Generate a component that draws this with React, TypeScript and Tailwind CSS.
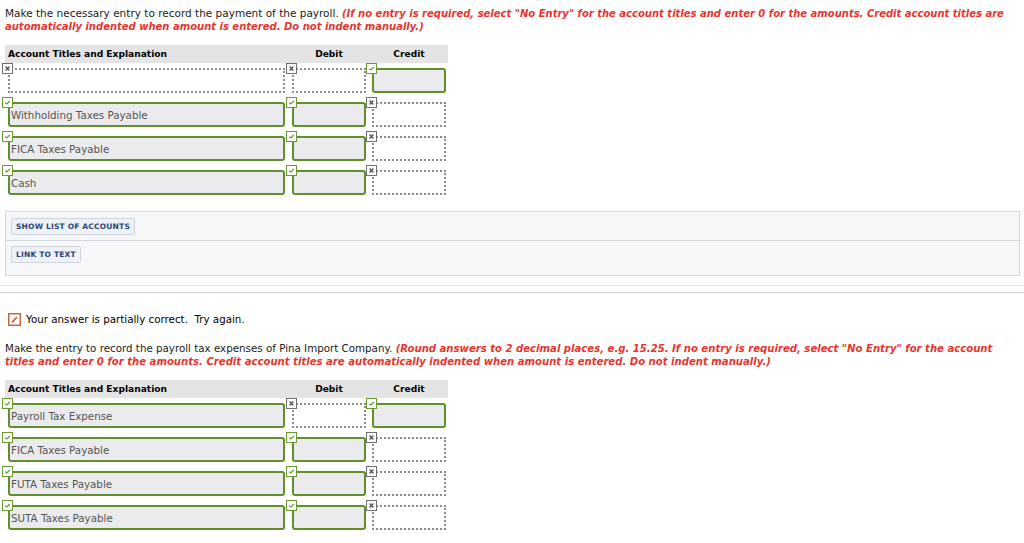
import React from 'react';

type Cell = { ok: boolean; text?: string };
type Row = [Cell, Cell, Cell];

const first: Row[] = [
  [{ ok: false }, { ok: false }, { ok: true }],
  [{ ok: true, text: 'Withholding Taxes Payable' }, { ok: true }, { ok: false }],
  [{ ok: true, text: 'FICA Taxes Payable' }, { ok: true }, { ok: false }],
  [{ ok: true, text: 'Cash' }, { ok: true }, { ok: false }],
];

const second: Row[] = [
  [{ ok: true, text: 'Payroll Tax Expense' }, { ok: false }, { ok: true }],
  [{ ok: true, text: 'FICA Taxes Payable' }, { ok: true }, { ok: false }],
  [{ ok: true, text: 'FUTA Taxes Payable' }, { ok: true }, { ok: false }],
  [{ ok: true, text: 'SUTA Taxes Payable' }, { ok: true }, { ok: false }],
];

function Mark({ ok }: { ok: boolean }) {
  if (ok) {
    return (
      <svg width="11" height="11" viewBox="0 0 11 11" className="absolute left-0 top-0 z-10">
        <rect x="0.5" y="0.5" width="10" height="10" fill="#fff" stroke="#6b9a35" />
        <path d="M3 5.6 L4.7 7 L7.9 4" fill="none" stroke="#6b9a35" strokeWidth="1.2" />
      </svg>
    );
  }
  return (
    <svg width="11" height="11" viewBox="0 0 11 11" className="absolute left-0 top-0 z-10">
      <rect x="0.5" y="0.5" width="10" height="10" fill="#fff" stroke="#6f6f6f" />
      <path d="M3.6 3.6 L7.4 7.4 M7.4 3.6 L3.6 7.4" fill="none" stroke="#555" strokeWidth="1.4" />
    </svg>
  );
}

function Field({ cell, wide }: { cell: Cell; wide?: boolean }) {
  const w = wide ? 'w-[284px]' : 'w-[80px]';
  const box = wide ? 'w-[277px]' : 'w-[74px]';
  return (
    <div className={`relative ${w} pl-[6px] pt-[5px] pb-[4px]`}>
      <Mark ok={cell.ok} />
      {cell.ok ? (
        <div className={`${box} h-[25px] rounded-[3px] border-2 border-[#618f2c] bg-[#ebebed] pl-[1px] text-[10.3px] leading-[22px] text-[#555]`}>
          {cell.text}
        </div>
      ) : (
        <div className={`${box} h-[25px] border-2 border-dotted border-[#8c8c8c] bg-white`} />
      )}
    </div>
  );
}

function Journal({ rows }: { rows: Row[] }) {
  return (
    <div>
      <div className="ml-[5px] flex h-[18px] w-[443px] items-center bg-[#e4e4e4] text-[9.1px] font-bold text-black">
        <div className="w-[281px] pl-[3px]">Account Titles and Explanation</div>
        <div className="w-[80px] pl-[6px] text-center">Debit</div>
        <div className="w-[80px] pl-[6px] text-center">Credit</div>
      </div>
      <div className="pl-[2px]">
        {rows.map((r, i) => (
          <div key={i} className="flex">
            <Field cell={r[0]} wide />
            <Field cell={r[1]} />
            <Field cell={r[2]} />
          </div>
        ))}
      </div>
    </div>
  );
}

export default function App() {
  return (
    <div className="h-[543px] w-[1024px] overflow-hidden bg-white text-[10.3px] leading-[13px] text-[#1a1a1a]" style={{ fontFamily: '"DejaVu Sans", Verdana, sans-serif' }}>
      <p className="whitespace-nowrap px-[5px] pt-[7px]">
        <span className="text-[10.5px]">Make the necessary entry to record the payment of the payroll.</span>{' '}
        <b className="text-[10px] italic text-[#e8352d]">
          (If no entry is required, select "No Entry" for the account titles and enter 0 for the amounts. Credit account titles are
          <br />
          automatically indented when amount is entered. Do not indent manually.)
        </b>
      </p>

      <div className="mt-[12px]">
        <Journal rows={first} />
      </div>

      <div className="mx-[5px] mt-[12px] w-[1015px] border border-[#d5d9df] bg-[#f6f7f9]">
        <div className="border-b border-[#d5d9df] px-[5px] pt-[6px] pb-[5px]">
          <button className="h-[17px] rounded-[2px] border border-[#cfd5de] bg-[#eef1f5] px-[4px] text-[7.5px] font-bold tracking-[0.2px] text-[#284678]">
            SHOW LIST OF ACCOUNTS
          </button>
        </div>
        <div className="px-[5px] pt-[5px] pb-[12px]">
          <button className="h-[17px] rounded-[2px] border border-[#cfd5de] bg-[#eef1f5] px-[4px] text-[7.5px] font-bold tracking-[0.2px] text-[#284678]">
            LINK TO TEXT
          </button>
        </div>
      </div>

      <div className="mt-[9px] h-[8px] border-t border-b border-t-[#e3e5e9] border-b-[#cdd3de]" />

      <div className="mt-[20px] flex items-center gap-[5px] pl-[8px]">
        <svg width="13" height="13" viewBox="0 0 13 13">
          <rect x="0.75" y="0.75" width="11.5" height="11.5" fill="#fff" stroke="#c66a3c" strokeWidth="1.5" />
          <path d="M4 9.2 L8.8 4.2" stroke="#d2452b" strokeWidth="1.6" />
        </svg>
        <span className="text-black">Your answer is partially correct.&nbsp; Try again.</span>
      </div>

      <p className="whitespace-nowrap px-[5px] pt-[16px]">
        Make the entry to record the payroll tax expenses of Pina Import Company.{' '}
        <b className="text-[10.1px] italic text-[#e8352d]">
          (Round answers to 2 decimal places, e.g. 15.25. If no entry is required, select "No Entry" for the account
          <br />
          titles and enter 0 for the amounts. Credit account titles are automatically indented when amount is entered. Do not indent manually.)
        </b>
      </p>

      <div className="mt-[12px]">
        <Journal rows={second} />
      </div>
    </div>
  );
}
